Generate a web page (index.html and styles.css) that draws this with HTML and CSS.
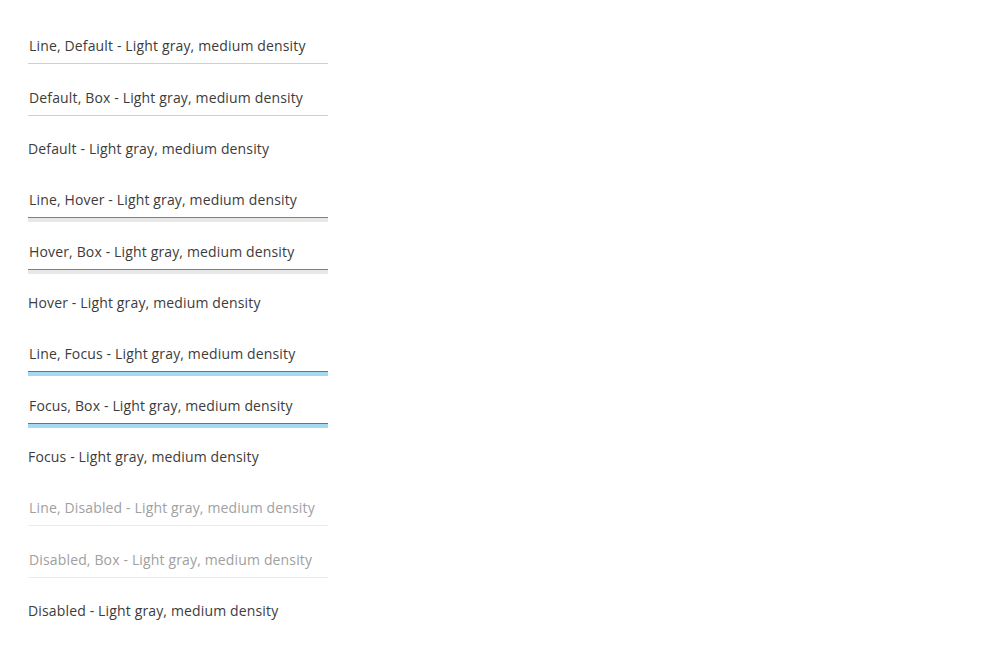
FILE: index.html
```html
<!DOCTYPE html>
<html lang="en">
<head>
<meta charset="utf-8">
<title>Text fields</title>
<link rel="stylesheet" href="styles.css">
</head>
<body>
<div class="list">
  <div class="row row-a"><div class="field line">Line, Default - Light gray, medium density</div></div>
  <div class="row"><div class="field box">Default, Box - Light gray, medium density</div></div>
  <div class="row"><div class="field plain">Default - Light gray, medium density</div></div>

  <div class="row row-a"><div class="field line hover">Line, Hover - Light gray, medium density</div></div>
  <div class="row"><div class="field box hover">Hover, Box - Light gray, medium density</div></div>
  <div class="row"><div class="field plain">Hover - Light gray, medium density</div></div>

  <div class="row row-a"><div class="field line focus">Line, Focus - Light gray, medium density</div></div>
  <div class="row"><div class="field box focus">Focus, Box - Light gray, medium density</div></div>
  <div class="row"><div class="field plain">Focus - Light gray, medium density</div></div>

  <div class="row row-a"><div class="field line disabled">Line, Disabled - Light gray, medium density</div></div>
  <div class="row"><div class="field box disabled">Disabled, Box - Light gray, medium density</div></div>
  <div class="row"><div class="field plain">Disabled - Light gray, medium density</div></div>
</div>
</body>
</html>
```

FILE: styles.css
```css
html, body {
  margin: 0;
  padding: 0;
  background: #ffffff;
}

body {
  font-family: "Open Sans", "Noto Sans", sans-serif;
  font-size: 14px;
  letter-spacing: 0.15px;
  color: #3c3c3c;
}

.list {
  display: flex;
  flex-direction: column;
  padding: 32px 0 0 28px;
}

.row {
  height: 51px;
}

.row-a {
  height: 52px;
}

.field {
  width: 300px;
  height: 27px;
  padding-bottom: 4px;
  display: flex;
  align-items: center;
  line-height: 20px;
  white-space: nowrap;
  box-sizing: content-box;
}

.line,
.box {
  padding-left: 1px;
  width: 299px;
  border-bottom: 1px solid #d0d0d0;
}

.plain {
  border-bottom: 1px solid transparent;
}

.hover {
  border-bottom-color: #808080;
  box-shadow: 0 4px 0 #e8e8e8;
}

.focus {
  border-bottom-color: #0696d7;
  box-shadow: 0 4px 0 #a3d9f1;
}

.disabled {
  color: #a0a0a0;
  border-bottom-color: #ebebeb;
}
```
